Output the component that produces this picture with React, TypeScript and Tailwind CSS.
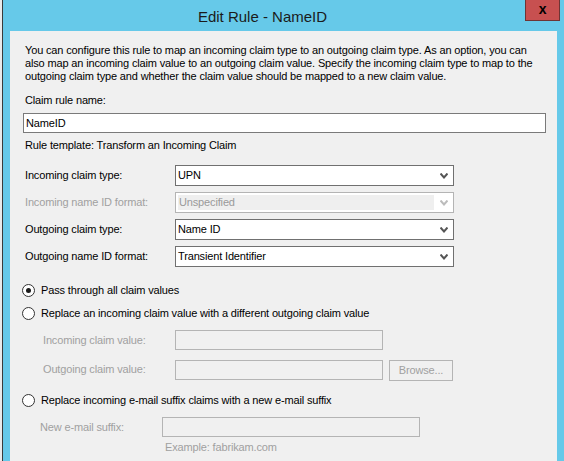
import React from 'react'

const font = { fontFamily: '"Liberation Sans", Arial, sans-serif' }

function Chevron({ disabled }: { disabled?: boolean }) {
  return (
    <svg width="8" height="6" viewBox="0 0 8 6" className="shrink-0">
      <path
        d="M0.5 0.5 L4 4.5 L7.5 0.5"
        fill="none"
        stroke={disabled ? '#bcbcbc' : '#555555'}
        strokeWidth="2"
      />
    </svg>
  )
}

function Select({ value, disabled }: { value: string; disabled?: boolean }) {
  return (
    <div
      className={
        'w-[279px] h-[21px] shrink-0 flex items-center border bg-white ' +
        (disabled ? 'border-[#b4b4b4]' : 'border-[#707070]')
      }
    >
      {disabled ? (
        <div className="ml-[2px] h-[15px] w-[256px] bg-[#efefef] flex items-center pl-[1px] text-[#9a9a9a]">
          {value}
        </div>
      ) : (
        <div className="pl-[2px] flex-1 text-black">{value}</div>
      )}
      <div className="ml-auto mr-[5px] flex items-center">
        <Chevron disabled={disabled} />
      </div>
    </div>
  )
}

function Radio({ checked, label }: { checked?: boolean; label: string }) {
  return (
    <div className="flex items-center h-[14px] pl-[12px]">
      <div className="w-[13px] h-[13px] shrink-0 rounded-full border border-[#333333] bg-white flex items-center justify-center">
        {checked && <div className="w-[5px] h-[5px] rounded-full bg-[#1a1a1a]" />}
      </div>
      <span className="ml-[6px] text-black whitespace-nowrap">{label}</span>
    </div>
  )
}

function Row({ label, children, disabled }: { label: string; children: React.ReactNode; disabled?: boolean }) {
  return (
    <div className="flex items-center">
      <div
        className={
          'w-[165px] shrink-0 pl-[15px] whitespace-nowrap ' + (disabled ? 'text-[#a0a0a0]' : 'text-black')
        }
      >
        {label}
      </div>
      {children}
    </div>
  )
}

export default function App() {
  return (
    <div
      className="w-[564px] h-[461px] flex overflow-hidden bg-[#66c9e9] text-[11px] leading-[13px] tracking-[-0.15px]"
      style={font}
    >
      {/* remnant of the window behind */}
      <div className="w-[2px] bg-[#eaeaea]" />
      <div className="w-[1px] bg-[#3a3a3a]" />

      <div className="flex-1 flex flex-col relative">
        {/* title bar */}
        <div className="h-[31px] flex items-center justify-center pr-[42px] pt-[1px]">
          <span className="text-[15px] tracking-normal text-[#1b1b1b]">Edit Rule - NameID</span>
        </div>
        <div className="absolute top-0 right-[4px] w-[35px] h-[21px] bg-[#c75050] border border-[#6e3434] border-t-0 flex items-center justify-center">
          <span className="text-[14px] font-bold text-black leading-none -mt-[2px]">x</span>
        </div>

        {/* client area */}
        <div className="flex-1 ml-[7px] mr-[7px] bg-[#f0f0f0] flex flex-col text-black">
          <p className="pl-[15px] pt-[13px] whitespace-nowrap">
            You can configure this rule to map an incoming claim type to an outgoing claim type. As an option, you can
            <br />
            also map an incoming claim value to an outgoing claim value. Specify the incoming claim type to map to the
            <br />
            outgoing claim type and whether the claim value should be mapped to a new claim value.
          </p>

          <div className="pl-[15px] mt-[11px]">Claim rule name:</div>
          <div className="ml-[13px] mt-[6px] w-[523px] h-[20px] border border-[#7a7a7a] bg-white flex items-center pl-[2px]">
            NameID
          </div>
          <div className="pl-[15px] mt-[6px]">Rule template: Transform an Incoming Claim</div>

          <div className="mt-[13px] flex flex-col gap-[6px]">
            <Row label="Incoming claim type:">
              <Select value="UPN" />
            </Row>
            <Row label="Incoming name ID format:" disabled>
              <Select value="Unspecified" disabled />
            </Row>
            <Row label="Outgoing claim type:">
              <Select value="Name ID" />
            </Row>
            <Row label="Outgoing name ID format:">
              <Select value="Transient Identifier" />
            </Row>
          </div>

          <div className="mt-[16px]">
            <Radio checked label="Pass through all claim values" />
          </div>
          <div className="mt-[9px]">
            <Radio label="Replace an incoming claim value with a different outgoing claim value" />
          </div>

          <div className="mt-[10px] flex items-center">
            <div className="w-[165px] shrink-0 pl-[33px] text-[#a0a0a0] whitespace-nowrap">Incoming claim value:</div>
            <div className="w-[208px] h-[20px] border border-[#b4b4b4]" />
          </div>
          <div className="mt-[8px] flex items-center">
            <div className="w-[165px] shrink-0 pl-[33px] text-[#a0a0a0] whitespace-nowrap">Outgoing claim value:</div>
            <div className="w-[208px] h-[20px] border border-[#b4b4b4]" />
            <div className="ml-[6px] mt-[2px] w-[64px] h-[21px] border border-[#b4b4b4] bg-[#f0f0f0] flex items-center justify-center text-[#a0a0a0]">
              Browse...
            </div>
          </div>

          <div className="mt-[12px]">
            <Radio label="Replace incoming e-mail suffix claims with a new e-mail suffix" />
          </div>
          <div className="mt-[10px] flex items-center">
            <div className="w-[152px] shrink-0 pl-[30px] text-[#a0a0a0] whitespace-nowrap">New e-mail suffix:</div>
            <div className="w-[258px] h-[20px] border border-[#b4b4b4]" />
          </div>
          <div className="mt-[4px] pl-[155px] text-[#a0a0a0]">Example: fabrikam.com</div>
        </div>
      </div>
    </div>
  )
}
